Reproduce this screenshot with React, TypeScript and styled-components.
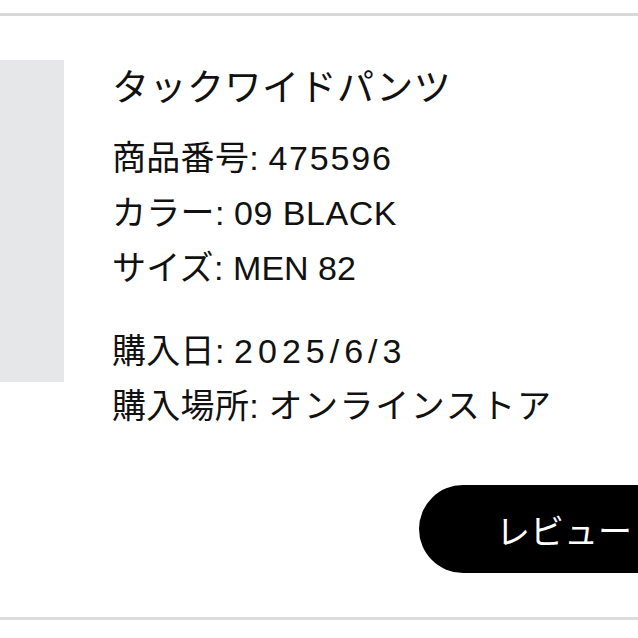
import React from "react";
import styled, { createGlobalStyle } from "styled-components";

const Global = createGlobalStyle`
  html, body {
    margin: 0;
    padding: 0;
    background: #ffffff;
    overflow: hidden;
  }
  body {
    font-family: "Liberation Sans", "Noto Sans CJK JP", sans-serif;
    color: #111111;
  }
`;

const Page = styled.div`
  width: 638px;
  height: 638px;
  padding-top: 13px;
  box-sizing: border-box;
  overflow: hidden;
`;

const Card = styled.section`
  height: 607px;
  box-sizing: border-box;
  border-top: 3px solid #d9d9d9;
  border-bottom: 3px solid #dcdcdc;
  display: flex;
  flex-direction: column;
`;

const Body = styled.div`
  display: flex;
  align-items: flex-start;
`;

const Thumb = styled.div`
  flex: 0 0 64px;
  height: 322px;
  margin-top: 44px;
  background: #e6e7e9;
`;

const Info = styled.div`
  margin-left: 48px;
  padding-top: 51px;
  display: flex;
  flex-direction: column;
`;

const Title = styled.h2`
  margin: 0 0 20px;
  font-size: 37px;
  letter-spacing: 0.5px;
  line-height: 44px;
  font-weight: 400;
  white-space: nowrap;
`;

const Group = styled.div<{ $gap?: number }>`
  display: flex;
  flex-direction: column;
  margin-top: ${(p) => p.$gap ?? 0}px;
`;

const Line = styled.p`
  margin: 0;
  font-size: 34px;
  line-height: 55px;
  font-weight: 400;
  white-space: nowrap;
`;

const Label = styled.span`
  letter-spacing: 0.3px;
`;

const Value = styled.span<{ $track?: number }>`
  letter-spacing: ${(p) => p.$track ?? 0}px;
`;

const Actions = styled.div`
  display: flex;
  padding-left: 419px;
  margin-top: 51px;
`;

const ReviewButton = styled.button`
  flex: 0 0 auto;
  height: 88px;
  border: none;
  border-radius: 44px;
  background: #000000;
  color: #ffffff;
  font-family: "Liberation Sans", "Noto Sans CJK JP", sans-serif;
  font-size: 34px;
  font-weight: 400;
  padding: 0 120px 0 77px;
  white-space: nowrap;
  cursor: pointer;
`;

const rows = [
  { label: "商品番号:", value: "475596", track: 1.8 },
  { label: "カラー:", value: "09 BLACK", track: 0.5 },
  { label: "サイズ:", value: "MEN 82", track: 0 },
];

const purchase = [
  { label: "購入日:", value: "2025/6/3", track: 5 },
  { label: "購入場所:", value: "オンラインストア", track: 1.6 },
];

export default function App() {
  return (
    <>
      <Global />
      <Page>
        <Card>
          <Body>
            <Thumb />
            <Info>
              <Title>タックワイドパンツ</Title>
              <Group>
                {rows.map((r) => (
                  <Line key={r.label}>
                    <Label>{r.label}</Label> <Value $track={r.track}>{r.value}</Value>
                  </Line>
                ))}
              </Group>
              <Group $gap={28}>
                {purchase.map((r) => (
                  <Line key={r.label}>
                    <Label>{r.label}</Label> <Value $track={r.track}>{r.value}</Value>
                  </Line>
                ))}
              </Group>
            </Info>
          </Body>
          <Actions>
            <ReviewButton>レビュー</ReviewButton>
          </Actions>
        </Card>
      </Page>
    </>
  );
}
